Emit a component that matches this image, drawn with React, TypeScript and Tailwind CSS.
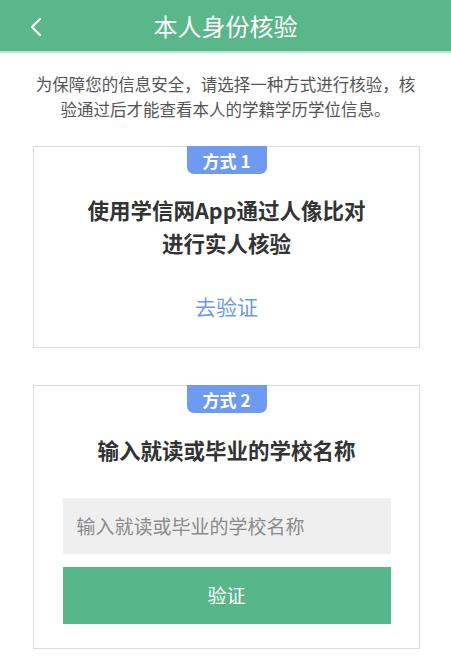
import React from 'react';

const font = { fontFamily: '"Noto Sans CJK SC", "Noto Sans", sans-serif' };

const Badge: React.FC<{ label: string }> = ({ label }) => (
  <div className="absolute left-1/2 top-[-1px] -translate-x-1/2 w-[80px] h-[28px] flex items-center justify-center rounded-b-[7px] bg-[#6e9bf0] text-white text-[17px] font-bold leading-none">
    {label}
  </div>
);

const App: React.FC = () => {
  return (
    <div className="w-[451px] h-[665px] bg-white overflow-hidden" style={font}>
      <header className="relative h-[53px] bg-[#5ab78a] border-b-2 border-[#bfe3d1] flex items-center justify-center">
        <svg className="absolute left-[29px] top-[17px]" width="14" height="20" viewBox="0 0 14 20" fill="none">
          <path d="M11 2 L3 10 L11 18" stroke="white" strokeWidth="2.2" strokeLinecap="round" strokeLinejoin="round" />
        </svg>
        <h1 className="text-white text-[24px] leading-none">本人身份核验</h1>
      </header>

      <p className="mt-[19px] px-[30px] text-center text-[16.5px] leading-[25px] text-[#555]">
        为保障您的信息安全，请选择一种方式进行核验，核验通过后才能查看本人的学籍学历学位信息。
      </p>

      <section className="relative ml-[33px] w-[387px] mt-[24px] h-[202px] border border-[#dcdcdc] flex flex-col items-center">
        <Badge label="方式 1" />
        <h2 className="mt-[46px] text-center text-[21.5px] font-bold leading-[33px] text-[#333]">
          使用学信网App通过人像比对
          <br />
          进行实人核验
        </h2>
        <a className="mt-[37px] text-[21px] leading-none text-[#6d9be0]">去验证</a>
      </section>

      <section className="relative ml-[33px] w-[387px] mt-[37px] h-[264px] border border-[#dcdcdc] flex flex-col items-center">
        <Badge label="方式 2" />
        <h2 className="mt-[53px] text-center text-[21.5px] font-bold leading-none text-[#333]">输入就读或毕业的学校名称</h2>
        <div className="mt-[37px] w-[328px] flex flex-col gap-[13px]">
          <input
            className="h-[56px] w-full bg-[#efefef] px-[14px] text-[19px] text-[#333] placeholder:text-[#8a8a8a] outline-none"
            placeholder="输入就读或毕业的学校名称"
            style={font}
          />
          <button className="h-[57px] w-full bg-[#58b78a] text-white text-[19px]" style={font}>
            验证
          </button>
        </div>
      </section>
    </div>
  );
};

export default App;
